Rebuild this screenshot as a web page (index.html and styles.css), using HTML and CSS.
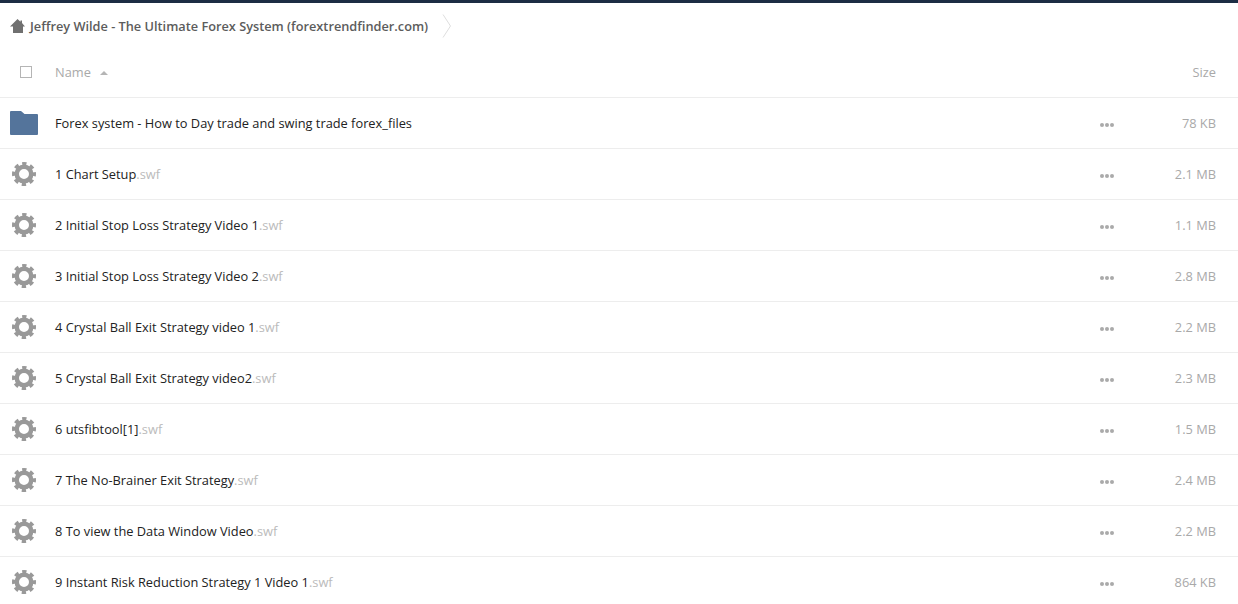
FILE: index.html
```html
<!DOCTYPE html>
<html lang="en">
<head>
<meta charset="utf-8">
<title>Jeffrey Wilde - The Ultimate Forex System</title>
<link rel="stylesheet" href="styles.css">
</head>
<body>
<svg class="defs" width="0" height="0" aria-hidden="true">
  <defs>
    <symbol id="gear" viewBox="0 0 24 24">
      <circle cx="12" cy="12" r="7.25" stroke-width="4.5"/>
      <circle cx="12" cy="12" r="10.3" stroke-width="3.4" stroke-dasharray="4.3 3.79" stroke-dashoffset="2.15" transform="rotate(0 12 12)"/>
    </symbol>
  </defs>
</svg>
<header class="breadcrumb">
  <svg class="home" viewBox="0 0 15 14" aria-hidden="true"><path d="M7.500 0 10.500 2.700V1.500h1.500v2.600L15 7.500h-2V14H3V7.500H0z"/></svg>
  <span class="crumb">Jeffrey Wilde - The Ultimate Forex System (forextrendfinder.com)</span>
  <svg class="chevron" viewBox="0 0 10 24" aria-hidden="true"><path d="M1 .5 8.500 12 1 23.500"/></svg>
</header>
<main class="list">
  <div class="row head">
    <span class="check-cell"><span class="check"></span></span>
    <span class="name head-name">Name <span class="sort"></span></span>
    <span class="size">Size</span>
  </div>
  <div class="row">
    <span class="icon-cell"><svg class="folder" viewBox="0 0 28 24" aria-hidden="true"><path d="M0 1a1 1 0 0 1 1-1h10l3.500 3H27a1 1 0 0 1 1 1v19a1 1 0 0 1-1 1H1a1 1 0 0 1-1-1z"/></svg></span>
    <span class="name">Forex system - How to Day trade and swing trade forex_files</span>
    <span class="more"><i></i><i></i><i></i></span>
    <span class="size">78 KB</span>
  </div>
  <div class="row">
    <span class="icon-cell"><svg class="gear"><use href="#gear"/></svg></span>
    <span class="name">1 Chart Setup<span class="ext">.swf</span></span>
    <span class="more"><i></i><i></i><i></i></span>
    <span class="size">2.1 MB</span>
  </div>
  <div class="row">
    <span class="icon-cell"><svg class="gear"><use href="#gear"/></svg></span>
    <span class="name">2 Initial Stop Loss Strategy Video 1<span class="ext">.swf</span></span>
    <span class="more"><i></i><i></i><i></i></span>
    <span class="size">1.1 MB</span>
  </div>
  <div class="row">
    <span class="icon-cell"><svg class="gear"><use href="#gear"/></svg></span>
    <span class="name">3 Initial Stop Loss Strategy Video 2<span class="ext">.swf</span></span>
    <span class="more"><i></i><i></i><i></i></span>
    <span class="size">2.8 MB</span>
  </div>
  <div class="row">
    <span class="icon-cell"><svg class="gear"><use href="#gear"/></svg></span>
    <span class="name">4 Crystal Ball Exit Strategy video 1<span class="ext">.swf</span></span>
    <span class="more"><i></i><i></i><i></i></span>
    <span class="size">2.2 MB</span>
  </div>
  <div class="row">
    <span class="icon-cell"><svg class="gear"><use href="#gear"/></svg></span>
    <span class="name">5 Crystal Ball Exit Strategy video2<span class="ext">.swf</span></span>
    <span class="more"><i></i><i></i><i></i></span>
    <span class="size">2.3 MB</span>
  </div>
  <div class="row">
    <span class="icon-cell"><svg class="gear"><use href="#gear"/></svg></span>
    <span class="name">6 utsfibtool[1]<span class="ext">.swf</span></span>
    <span class="more"><i></i><i></i><i></i></span>
    <span class="size">1.5 MB</span>
  </div>
  <div class="row">
    <span class="icon-cell"><svg class="gear"><use href="#gear"/></svg></span>
    <span class="name">7 The No-Brainer Exit Strategy<span class="ext">.swf</span></span>
    <span class="more"><i></i><i></i><i></i></span>
    <span class="size">2.4 MB</span>
  </div>
  <div class="row">
    <span class="icon-cell"><svg class="gear"><use href="#gear"/></svg></span>
    <span class="name">8 To view the Data Window Video<span class="ext">.swf</span></span>
    <span class="more"><i></i><i></i><i></i></span>
    <span class="size">2.2 MB</span>
  </div>
  <div class="row">
    <span class="icon-cell"><svg class="gear"><use href="#gear"/></svg></span>
    <span class="name">9 Instant Risk Reduction Strategy 1 Video 1<span class="ext">.swf</span></span>
    <span class="more"><i></i><i></i><i></i></span>
    <span class="size">864 KB</span>
  </div>
</main>
</body>
</html>
```
FILE: styles.css
```css
* { box-sizing: border-box; }
html, body { height: 100%; }
body {
  margin: 0;
  overflow: hidden;
  background: #fff;
  border-top: 3px solid #1c2d44;
  font-family: "Open Sans", sans-serif;
  font-size: 12.82px;
  color: #222;
}
.defs { display: block; height: 0; }
.breadcrumb {
  display: flex;
  align-items: center;
  height: 45px;
  padding-left: 10px;
}
.home { width: 15px; height: 14px; fill: #707070; margin-right: 5px; }
.crumb { font-size: 12.75px; font-weight: 600; color: #5c5c5c; }
.chevron { width: 10px; height: 24px; margin-left: 14px; fill: none; stroke: #dedede; }
.row {
  display: flex;
  align-items: center;
  height: 51px;
  border-bottom: 1px solid #ededed;
  padding-right: 22px;
}
.row.head { height: 50px; padding-bottom: 2px; }
.check-cell, .icon-cell {
  display: flex;
  flex: none;
  width: 55px;
  padding-left: 10px;
}
.check-cell { padding-left: 20px; }
.check { width: 12px; height: 12px; border: 1px solid #b5b5b5; }
.folder { width: 28px; height: 24px; fill: #54749b; }
.gear { width: 24px; height: 24px; margin-left: 2px; fill: none; stroke: #999; }
.name { flex: 1; color: #222; }
.head-name { color: #a9a9a9; }
.sort {
  display: inline-block;
  width: 0;
  height: 0;
  margin: 0 0 2px 6px;
  border: 4px solid transparent;
  border-top-width: 0;
  border-bottom: 4px solid #b5b5b5;
}
.ext { color: #bbb; }
.more { display: flex; gap: 1px; width: 14px; margin-top: 3px; }
.more i { width: 4px; height: 4px; border-radius: 50%; background: #aaa; }
.size { width: 102px; text-align: right; color: #a9a9a9; }
.head .size { margin-left: auto; flex: none; }
```
